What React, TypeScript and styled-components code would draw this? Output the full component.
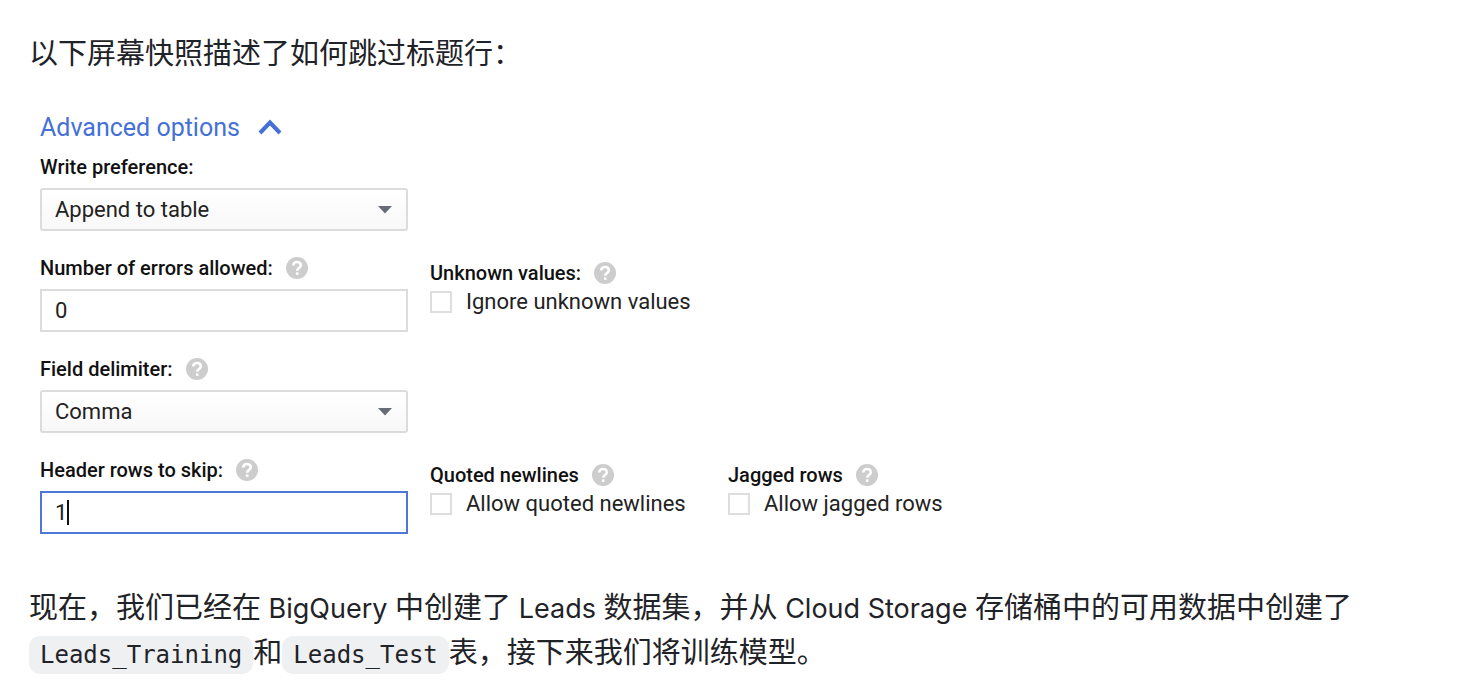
import React, { useId, useState } from "react";
import styled, { createGlobalStyle } from "styled-components";

const GlobalStyle = createGlobalStyle`
  *, *::before, *::after { box-sizing: border-box; }
  body {
    margin: 0;
    background: #fff;
    color: #1f2328;
    font-family: Inter, "Noto Sans CJK SC", sans-serif;
  }
`;

const Article = styled.article`
  padding: 32px 29px 20px;
`;

const Paragraph = styled.p`
  margin: 0;
  font-size: 29px;
  line-height: 44px;
`;

const Latin = styled.span`
  font-size: 27px;
`;

const Code = styled.code`
  padding: 5px 11px;
  border-radius: 11px;
  background: #eff0f2;
  font-family: "DejaVu Sans Mono", monospace;
  font-size: 24px;
`;

const Form = styled.form`
  margin: 33px 0 52px;
  padding-left: 11px;
  color: #111;
  font-family: Roboto, sans-serif;
`;

const Disclosure = styled.button`
  display: flex;
  align-items: center;
  gap: 18px;
  height: 36px;
  margin-bottom: 10px;
  padding: 0;
  border: 0;
  background: none;
  color: #4470d8;
  font-family: inherit;
  font-size: 25px;
  cursor: pointer;
`;

const Chevron = styled.svg<{ $open: boolean }>`
  transform: ${(p) => (p.$open ? "none" : "rotate(180deg)")};
`;

const Rows = styled.div`
  display: grid;
  gap: 25px;
`;

const Row = styled.div`
  display: flex;
  gap: 22px;
`;

const Field = styled.div`
  width: 368px;
`;

const CheckField = styled.div`
  min-width: 276px;
  padding-top: 5px;
`;

const Caption = styled.div`
  display: flex;
  align-items: center;
  gap: 13px;
  height: 24px;
  font-size: 20px;
  font-weight: 500;
  line-height: 24px;
`;

const HelpButton = styled.button`
  display: flex;
  padding: 0;
  border: 0;
  background: none;
  cursor: help;
`;

const Control = styled.div`
  position: relative;
  margin-top: 9px;
`;

const TextInput = styled.input<{ $active?: boolean }>`
  display: block;
  width: 100%;
  height: 43px;
  padding: 0 13px;
  border: 2px solid ${(p) => (p.$active ? "#4d78da" : "#dcdcdc")};
  background: #fff;
  color: #222;
  font-family: inherit;
  font-size: 22px;
  outline: 0;
`;

const Caret = styled.span`
  position: absolute;
  top: 9px;
  left: 27px;
  width: 2px;
  height: 25px;
  background: #111;
`;

const Select = styled.select`
  display: block;
  width: 100%;
  height: 43px;
  padding: 0 13px;
  border: 2px solid #dcdcdc;
  border-radius: 3px;
  background: linear-gradient(#fff, #f8f8f8);
  color: #222;
  font-family: inherit;
  font-size: 22px;
  appearance: none;
`;

const Arrow = styled.svg`
  position: absolute;
  top: 17px;
  right: 15px;
  pointer-events: none;
`;

const CheckLabel = styled.label`
  display: flex;
  align-items: center;
  gap: 14px;
  height: 33px;
  color: #222;
  font-size: 22px;
  white-space: nowrap;
`;

const Checkbox = styled.input`
  flex: none;
  width: 22px;
  height: 22px;
  margin: 0;
  border: 2px solid #dedede;
  background: #fff;
  appearance: none;

  &:checked {
    background: #4d78da;
  }
`;

function Help({ topic }: { topic: string }) {
  return (
    <HelpButton type="button" aria-label={`Help: ${topic}`}>
      <svg width="22" height="22" viewBox="0 0 22 22" aria-hidden="true">
        <circle cx="11" cy="11" r="11" fill="#cdcdcd" />
        <path
          d="M7.2 8.6C7.2 6.2 8.8 5 11 5s3.8 1.3 3.8 3.3c0 2.7-3.6 2.8-3.6 5.5"
          fill="none"
          stroke="#fff"
          strokeWidth="2.6"
        />
        <rect x="9.900" y="15.400" width="2.600" height="2.500" fill="#fff" />
      </svg>
    </HelpButton>
  );
}

function SelectField({ label, options, help }: { label: string; options: string[]; help?: boolean }) {
  const id = useId();
  return (
    <Field>
      <Caption>
        <label htmlFor={id}>{label}</label>
        {help && <Help topic={label} />}
      </Caption>
      <Control>
        <Select id={id}>
          {options.map((option) => (
            <option key={option}>{option}</option>
          ))}
        </Select>
        <Arrow width="16" height="9" viewBox="0 0 16 9" aria-hidden="true">
          <path d="M1 1h14L8 8.500z" fill="#666b75" />
        </Arrow>
      </Control>
    </Field>
  );
}

function TextField({ label, value, active }: { label: string; value: string; active?: boolean }) {
  const id = useId();
  return (
    <Field>
      <Caption>
        <label htmlFor={id}>{label}</label>
        <Help topic={label} />
      </Caption>
      <Control>
        <TextInput id={id} type="text" defaultValue={value} $active={active} />
        {active && <Caret />}
      </Control>
    </Field>
  );
}

function CheckOption({ title, label }: { title: string; label: string }) {
  return (
    <CheckField>
      <Caption>
        <span>{title}</span>
        <Help topic={title} />
      </Caption>
      <CheckLabel>
        <Checkbox type="checkbox" />
        {label}
      </CheckLabel>
    </CheckField>
  );
}

export default function App() {
  const [open, setOpen] = useState(true);
  return (
    <>
      <GlobalStyle />
      <Article lang="zh-CN">
        <Paragraph>以下屏幕快照描述了如何跳过标题行：</Paragraph>
        <Form lang="en">
          <Disclosure type="button" aria-expanded={open} onClick={() => setOpen(!open)}>
            Advanced options
            <Chevron $open={open} width="24" height="16" viewBox="0 0 24 16" aria-hidden="true">
              <path d="M2 14 12 3.500 22 14" fill="none" stroke="#4470d8" strokeWidth="4" />
            </Chevron>
          </Disclosure>
          {open && (
            <Rows>
              <Row>
                <SelectField
                  label="Write preference:"
                  options={["Append to table", "Write if empty", "Overwrite table"]}
                />
              </Row>
              <Row>
                <TextField label="Number of errors allowed:" value="0" />
                <CheckOption title="Unknown values:" label="Ignore unknown values" />
              </Row>
              <Row>
                <SelectField label="Field delimiter:" options={["Comma", "Tab", "Pipe"]} help />
              </Row>
              <Row>
                <TextField label="Header rows to skip:" value="1" active />
                <CheckOption title="Quoted newlines" label="Allow quoted newlines" />
                <CheckOption title="Jagged rows" label="Allow jagged rows" />
              </Row>
            </Rows>
          )}
        </Form>
        <Paragraph>
          现在，我们已经在<Latin> BigQuery </Latin>中创建了<Latin> Leads </Latin>数据集，并从
          <Latin> Cloud Storage </Latin>存储桶中的可用数据中创建了 <Code>Leads_Training</Code>和
          <Code>Leads_Test</Code>表，接下来我们将训练模型。
        </Paragraph>
      </Article>
    </>
  );
}
